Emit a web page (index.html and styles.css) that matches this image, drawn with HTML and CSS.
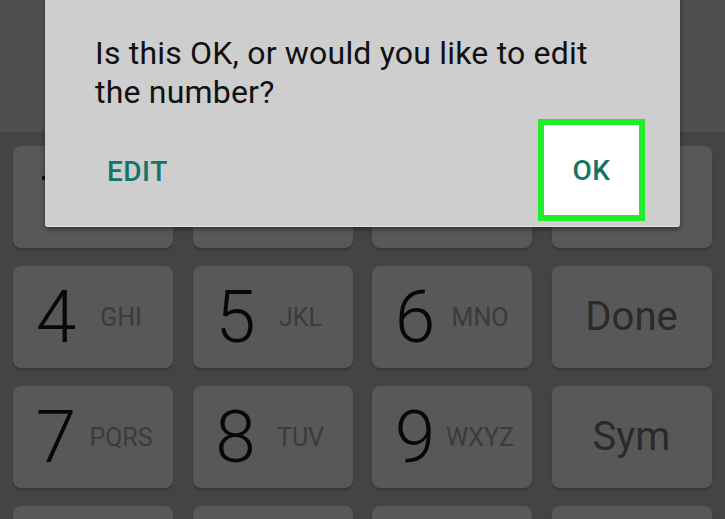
FILE: index.html
```html
<!DOCTYPE html>
<html>
<head>
<meta charset="utf-8">
<link rel="stylesheet" href="styles.css">
</head>
<body>
<div class="screen">
  <div class="topbar"></div>
  <div class="keyboard">
    <div class="key key-num"><span class="digit">1</span><span class="letters"></span></div>
    <div class="key key-num"><span class="digit">2</span><span class="letters">ABC</span></div>
    <div class="key key-num"><span class="digit">3</span><span class="letters">DEF</span></div>
    <div class="key"></div>
    <div class="key key-num"><span class="digit">4</span><span class="letters">GHI</span></div>
    <div class="key key-num"><span class="digit">5</span><span class="letters">JKL</span></div>
    <div class="key key-num"><span class="digit">6</span><span class="letters">MNO</span></div>
    <div class="key"><span class="word">Done</span></div>
    <div class="key key-num"><span class="digit">7</span><span class="letters">PQRS</span></div>
    <div class="key key-num"><span class="digit">8</span><span class="letters">TUV</span></div>
    <div class="key key-num"><span class="digit">9</span><span class="letters">WXYZ</span></div>
    <div class="key"><span class="word">Sym</span></div>
    <div class="key"></div>
    <div class="key"></div>
    <div class="key"></div>
    <div class="key"></div>
  </div>
  <div class="dialog">
    <p class="message">Is this OK, or would you like to edit<br>the number?</p>
    <div class="actions">
      <button class="btn btn-edit">EDIT</button>
      <button class="btn btn-ok">OK</button>
    </div>
  </div>
</div>
</body>
</html>
```

FILE: styles.css
```css
html, body {
  margin: 0;
  padding: 0;
  width: 725px;
  height: 519px;
  overflow: hidden;
  background: #444444;
  font-family: Roboto, "Liberation Sans", sans-serif;
}

.screen {
  position: relative;
  width: 725px;
  height: 519px;
  overflow: hidden;
}

.topbar {
  height: 132px;
  background: #4f4f4f;
}

.keyboard {
  background: #444444;
  padding: 14px 0 0 13px;
  display: grid;
  grid-template-columns: repeat(4, 160px);
  grid-auto-rows: 102px;
  column-gap: 19.5px;
  row-gap: 18px;
}

.key {
  background: #585858;
  border-radius: 8px;
  box-shadow: 0 2px 2px rgba(0, 0, 0, 0.22);
  display: flex;
  align-items: center;
  justify-content: center;
}

.key-num {
  display: grid;
  grid-template-columns: 56px 26px 74px;
  grid-template-rows: 102px;
  align-items: center;
}

.digit {
  grid-column: 1 / 3;
  grid-row: 1;
  justify-self: center;
  font-size: 73px;
  font-weight: 300;
  line-height: 1;
  color: #080808;
}

.letters {
  grid-column: 2 / 4;
  grid-row: 1;
  justify-self: center;
  white-space: nowrap;
  font-size: 25px;
  line-height: 1;
  color: #3b3b3b;
}

.word {
  font-size: 40px;
  line-height: 1;
  color: #2a2a2a;
}

.dialog {
  position: absolute;
  left: 45px;
  top: -4px;
  width: 635px;
  height: 231px;
  background: #cecece;
  border-radius: 3px;
  border-bottom: 1px solid #e2e2e2;
  box-shadow: 0 2px 5px rgba(0, 0, 0, 0.45);
  box-sizing: border-box;
  display: flex;
  flex-direction: column;
}

.message {
  margin: 38px 0 0 50px;
  font-size: 32px;
  letter-spacing: 0.2px;
  line-height: 38.5px;
  color: #111111;
  white-space: nowrap;
}

.actions {
  margin-top: 7.5px;
  display: flex;
  align-items: center;
  justify-content: space-between;
  padding: 0 35px 0 62px;
}

.btn {
  font-family: Roboto, "Liberation Sans", sans-serif;
  font-size: 28px;
  letter-spacing: 0.5px;
  font-weight: 500;
  color: #137566;
  background: transparent;
  border: none;
  padding: 0;
  margin: 0;
  line-height: 1;
}

.btn-edit {
  padding-top: 5px;
}

.btn-ok {
  width: 107px;
  height: 102px;
  background: #ffffff;
  border: 6px solid #22ec2c;
  box-sizing: border-box;
  display: flex;
  align-items: center;
  justify-content: center;
  padding-top: 2px;
}
```
